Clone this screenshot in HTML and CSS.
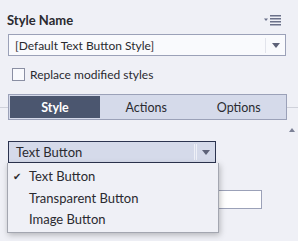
FILE: index.html
```html
<!DOCTYPE html>
<html lang="en">
<head>
    <meta charset="UTF-8">
    <title>Style Name</title>
    <link rel="stylesheet" href="styles.css">
</head>
<body>
    <div class="panel">
        <div class="header">
            <div class="title">Style Name</div>
            <svg class="menu-icon" width="18" height="13" viewBox="0 0 18 13">
                <path d="M0 3.5h4l-2 2.5z" fill="#6b7189"/>
                <rect x="6" y="0" width="11" height="1.5" fill="#6b7189"/>
                <rect x="6" y="3" width="11" height="1.5" fill="#6b7189"/>
                <rect x="6" y="6" width="11" height="1.5" fill="#6b7189"/>
                <rect x="6" y="9" width="11" height="1.5" fill="#6b7189"/>
            </svg>
        </div>

        <div class="name-select">
            <span>[Default Text Button Style]</span>
            <span class="sep"></span>
            <span class="arrow"></span>
        </div>

        <label class="check-row">
            <span class="checkbox"></span>
            Replace modified styles
        </label>

        <div class="tab-row">
            <div class="tabs">
                <div class="tab active">Style</div>
                <div class="tab">Actions</div>
                <div class="tab">Options</div>
            </div>
        </div>

        <div class="collapse"><span class="up"></span></div>

        <div class="type-area">
            <div class="type-select">
                <span>Text Button</span>
                <span class="sep double"></span>
                <span class="arrow"></span>
            </div>

            <div class="field-row">
                <div class="field"></div>
            </div>

            <div class="dropdown">
                <div class="item checked">Text Button</div>
                <div class="item">Transparent Button</div>
                <div class="item">Image Button</div>
            </div>
        </div>
    </div>
</body>
</html>
```

FILE: styles.css
```css
body {
    margin: 0;
    padding: 0;
    background-color: #eff0f6;
    font-family: Lato, "Open Sans", sans-serif;
    color: #2a2a30;
}
.panel {
    width: 298px;
    height: 241px;
    overflow: hidden;
}
.header {
    display: flex;
    justify-content: space-between;
    align-items: center;
    padding: 12px 16px 0 7px;
    height: 16px;
}
.title {
    font-weight: bold;
    font-size: 13px;
}
.menu-icon {
    margin-top: 2px;
}
.name-select {
    display: flex;
    align-items: center;
    margin: 6px 12px 0 8px;
    height: 20px;
    border: 1px solid #9ba1b8;
    background-color: #f9fafd;
    font-size: 12px;
    padding-left: 6px;
}
.name-select span:first-child {
    flex: 1;
}
.sep {
    width: 1px;
    height: 15px;
    background-color: #e2e4ec;
    margin-right: 6px;
}
.arrow {
    width: 0;
    height: 0;
    border-left: 4px solid transparent;
    border-right: 4px solid transparent;
    border-top: 5px solid #5d6278;
    margin-right: 5px;
}
.check-row {
    display: flex;
    align-items: center;
    margin: 12px 0 0 12px;
    font-size: 12px;
    height: 13px;
}
.checkbox {
    width: 11px;
    height: 11px;
    border: 1px solid #8a8fa3;
    background-color: #f9fafd;
    margin-right: 5px;
}
.tab-row {
    display: flex;
    align-items: center;
    margin-top: 13px;
}
.tab-row::before,
.tab-row::after {
    content: "";
    height: 1px;
    background-color: #cfd1da;
}
.tab-row::before {
    width: 8px;
}
.tab-row::after {
    flex: 1;
}
.tabs {
    display: flex;
    width: 275px;
    height: 22px;
    padding: 1px;
    border: 1px solid #9ba1b8;
    background-color: #d5daea;
}
.tab {
    flex: 1;
    display: flex;
    align-items: center;
    justify-content: center;
    font-size: 12.5px;
}
.tab.active {
    flex: 0 0 90px;
    background-color: #4b566f;
    color: #fff;
    font-weight: bold;
}
.collapse {
    display: flex;
    justify-content: flex-end;
    padding: 8px 3px 0 0;
    height: 8px;
}
.up {
    width: 0;
    height: 0;
    border-left: 3px solid transparent;
    border-right: 3px solid transparent;
    border-bottom: 4px solid #7c8196;
}
.type-area {
    position: relative;
    margin-top: 5px;
}
.type-select {
    display: flex;
    align-items: center;
    margin-left: 8px;
    width: 199px;
    height: 20px;
    padding-left: 7px;
    border: 1px solid #2c3450;
    background-color: #d5daea;
    font-size: 13px;
}
.type-select span:first-child {
    flex: 1;
}
.sep.double {
    width: 3px;
    height: 16px;
    background-color: transparent;
    border-left: 1px solid #eef0f7;
    border-right: 1px solid #eef0f7;
    box-sizing: border-box;
    margin-right: 5px;
}
.field-row {
    display: flex;
    justify-content: flex-end;
    padding: 27px 36px 0 0;
}
.field {
    width: 60px;
    height: 17px;
    border: 1px solid #9ba1b8;
    background-color: #fff;
}
.dropdown {
    position: absolute;
    top: 22px;
    left: 7px;
    width: 210px;
    height: 66px;
    border: 1px solid #a3a6b0;
    border-top: none;
    background-color: #eff0f6;
    box-shadow: 1px 2px 6px rgba(0, 0, 0, 0.25);
    padding-top: 3px;
}
.item {
    height: 21.5px;
    line-height: 20px;
    padding-left: 21px;
    font-size: 13px;
    position: relative;
}
.item.checked::before {
    content: "\2714";
    position: absolute;
    left: 5px;
    font-size: 10px;
}
```
